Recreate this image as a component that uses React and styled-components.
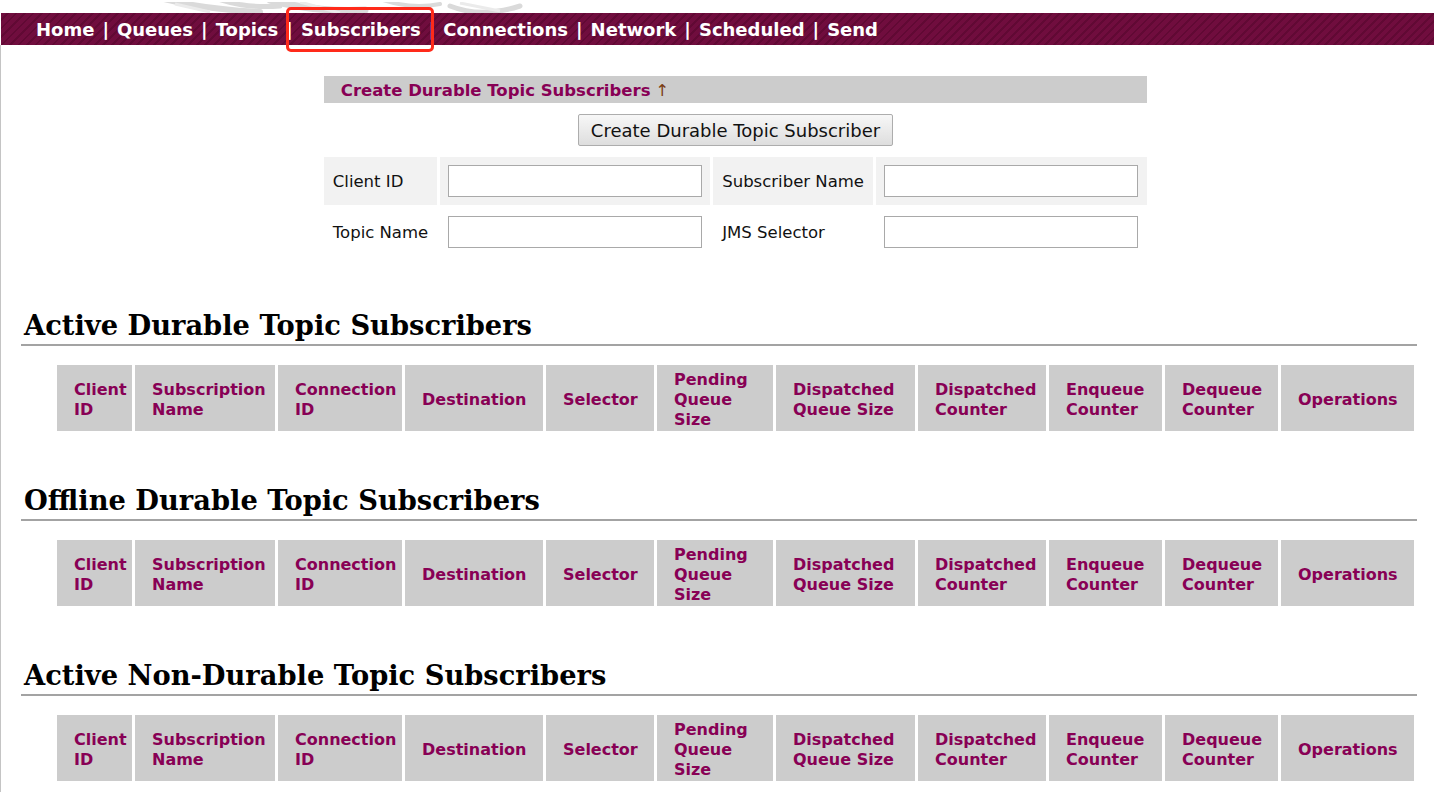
import React from "react";
import styled, { createGlobalStyle } from "styled-components";

const GlobalStyle = createGlobalStyle`
  html, body {
    margin: 0;
    padding: 0;
    background: #fff;
  }
  body {
    font-family: "DejaVu Sans", Verdana, sans-serif;
    color: #111;
  }
`;

const Page = styled.div`
  width: 1434px;
  overflow: hidden;
`;

const Banner = styled.div`
  height: 13px;
  padding-left: 150px;
  overflow: hidden;
`;

const NavBar = styled.nav`
  height: 32px;
  display: flex;
  align-items: center;
  padding-left: 35px;
  margin-left: 1px;
  background-color: #6e0c3c;
  background-image: repeating-linear-gradient(
    135deg,
    #700d3e 0px,
    #700d3e 4px,
    #610934 4px,
    #610934 6px
  );
  font-size: 18px;
  font-weight: bold;
  color: #fff;
`;

const NavLink = styled.a`
  position: relative;
  display: inline-block;
  line-height: 32px;
  padding-top: 1px;
  color: #fff;
  text-decoration: none;

  ${(p) =>
    p.$active &&
    `
    &::after {
      content: "";
      position: absolute;
      top: -6px;
      bottom: -6px;
      left: -15px;
      right: -13px;
      border: 3px solid #ff2a1a;
      border-radius: 5px;
    }
  `}
`;

const Sep = styled.span`
  margin: 0 8px;
  padding-top: 1px;
`;

const Main = styled.main`
  display: flow-root;
  border-left: 1px solid #c4c4c4;
  padding: 0 17px 40px 20px;
`;

const Inner = styled.div`
  margin-left: 33px;
  width: 1363px;
`;

const FormTable = styled.table`
  border-spacing: 3px;
  margin: 28px auto 0;
  font-size: 16.5px;
`;

const FormHead = styled.th`
  height: 27px;
  box-sizing: border-box;
  padding: 2px 17px 0;
  background: #cccccc;
  color: #880055;
  font-size: 16.5px;
  line-height: 20px;
  font-weight: bold;
  text-align: left;
`;

const Arrow = styled.span`
  color: #7a3d12;
  font-weight: normal;
  margin-left: 5px;
`;

const ButtonCell = styled.td`
  height: 48px;
  padding: 0;
  vertical-align: middle;
`;

const Button = styled.button`
  display: block;
  margin: 0 auto;
  height: 32px;
  padding: 0 12px;
  font-family: "DejaVu Sans", Verdana, sans-serif;
  font-size: 18px;
  color: #111;
  background: linear-gradient(#f7f7f7, #dedede);
  border: 1px solid #adadad;
  border-radius: 2px;
`;

const FormRow = styled.tr`
  & > td {
    background: ${(p) => (p.$shaded ? "#f2f2f2" : "#ffffff")};
  }
`;

const LabelCell = styled.td`
  height: 48px;
  width: ${(p) => p.$w}px;
  box-sizing: border-box;
  padding: 0 9px;
  vertical-align: middle;
  white-space: nowrap;
`;

const InputCell = styled.td`
  height: 48px;
  width: ${(p) => p.$w}px;
  box-sizing: border-box;
  padding: 0 8px;
  vertical-align: middle;
`;

const TextInput = styled.input`
  display: block;
  width: 254px;
  height: 32px;
  box-sizing: border-box;
  border: 1px solid #a9a9a9;
  background: #fff;
`;

const Heading = styled.h2`
  margin: 49px 0 0;
  padding: 0 0 2px 3px;
  font-family: "DejaVu Serif", Georgia, serif;
  font-size: 27.3px;
  line-height: 34px;
  font-weight: bold;
  color: #000;
  border-bottom: 2px solid #a3a3a3;
`;

const DataTable = styled.table`
  width: 1363px;
  table-layout: fixed;
  border-spacing: 3px;
  margin-top: 16px;
`;

const HeadCell = styled.th`
  width: ${(p) => p.$w}px;
  height: 66px;
  box-sizing: border-box;
  padding: 5px 4px 1px 17px;
  background: #cccccc;
  color: #880055;
  font-size: 16px;
  line-height: 20px;
  font-weight: bold;
  text-align: left;
  vertical-align: middle;
`;

const navItems = [
  "Home",
  "Queues",
  "Topics",
  "Subscribers",
  "Connections",
  "Network",
  "Scheduled",
  "Send",
];

const columns = [
  ["Client ID", 75],
  ["Subscription Name", 140],
  ["Connection ID", 124],
  ["Destination", 138],
  ["Selector", 108],
  ["Pending Queue Size", 116],
  ["Dispatched Queue Size", 139],
  ["Dispatched Counter", 128],
  ["Enqueue Counter", 113],
  ["Dequeue Counter", 113],
  ["Operations", 133],
];

const sections = [
  "Active Durable Topic Subscribers",
  "Offline Durable Topic Subscribers",
  "Active Non-Durable Topic Subscribers",
];

const Swirl = () => (
  <svg width="380" height="13" viewBox="0 0 380 13">
    <g fill="none" stroke="#dadada" strokeLinecap="round">
      <path d="M10 -4 C 40 4, 70 8, 110 10" strokeWidth="6" />
      <path d="M60 -6 C 80 2, 100 6, 130 4" strokeWidth="5" />
      <path d="M120 -2 C 150 6, 180 10, 215 8" strokeWidth="7" />
      <path d="M230 -3 C 250 4, 270 6, 290 2" strokeWidth="4" />
      <path d="M300 4 C 320 12, 345 12, 370 4" strokeWidth="5" />
    </g>
    <g fill="none" stroke="#ebebeb" strokeWidth="3">
      <path d="M25 2 L 60 10" />
      <path d="M150 0 L 190 11" />
      <path d="M310 1 L 350 9" />
    </g>
  </svg>
);

const SubscriberTable = () => (
  <DataTable>
    <thead>
      <tr>
        {columns.map(([label, w]) => (
          <HeadCell key={label} $w={w}>
            {label}
          </HeadCell>
        ))}
      </tr>
    </thead>
  </DataTable>
);

export default function App() {
  return (
    <Page>
      <GlobalStyle />
      <Banner>
        <Swirl />
      </Banner>
      <NavBar>
        {navItems.map((item, i) => (
          <React.Fragment key={item}>
            {i > 0 && <Sep>|</Sep>}
            <NavLink href="#" $active={item === "Subscribers"}>
              {item}
            </NavLink>
          </React.Fragment>
        ))}
      </NavBar>
      <Main>
        <Inner>
          <FormTable>
            <tbody>
              <tr>
                <FormHead colSpan={4}>
                  Create Durable Topic Subscribers<Arrow>↑</Arrow>
                </FormHead>
              </tr>
              <tr>
                <ButtonCell colSpan={4}>
                  <Button type="button">Create Durable Topic Subscriber</Button>
                </ButtonCell>
              </tr>
              <FormRow $shaded>
                <LabelCell $w={113}>Client ID</LabelCell>
                <InputCell $w={270}>
                  <TextInput type="text" />
                </InputCell>
                <LabelCell $w={160}>Subscriber Name</LabelCell>
                <InputCell $w={271}>
                  <TextInput type="text" />
                </InputCell>
              </FormRow>
              <FormRow>
                <LabelCell $w={113}>Topic Name</LabelCell>
                <InputCell $w={270}>
                  <TextInput type="text" />
                </InputCell>
                <LabelCell $w={160}>JMS Selector</LabelCell>
                <InputCell $w={271}>
                  <TextInput type="text" />
                </InputCell>
              </FormRow>
            </tbody>
          </FormTable>
        </Inner>
        {sections.map((title) => (
          <React.Fragment key={title}>
            <Heading>{title}</Heading>
            <Inner>
              <SubscriberTable />
            </Inner>
          </React.Fragment>
        ))}
      </Main>
    </Page>
  );
}
